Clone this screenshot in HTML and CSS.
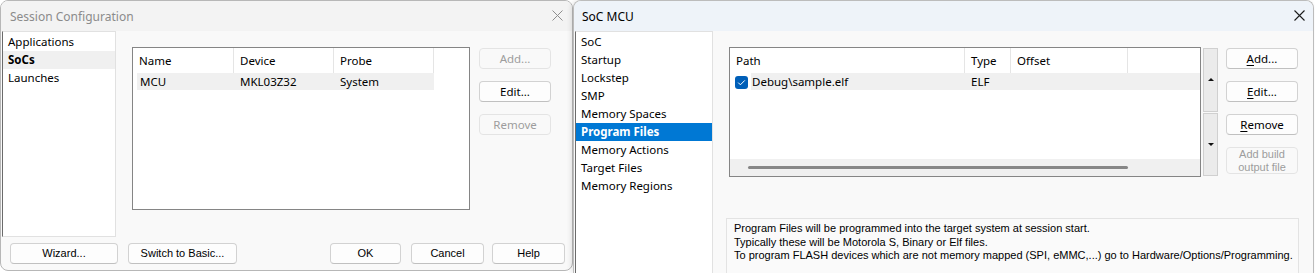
FILE: index.html
```html
<!DOCTYPE html>
<html lang="en">
<head>
<meta charset="utf-8">
<title>Session Configuration</title>
<link rel="stylesheet" href="styles.css">
</head>
<body>
  <section class="win win-session">
    <header class="titlebar titlebar-inactive">
      <span class="title">Session Configuration</span>
      <svg class="close" width="11" height="11" viewBox="0 0 11 11"><path d="M0.5 0.5L10.5 10.5M10.5 0.5L0.5 10.5"/></svg>
    </header>
    <div class="win-body">
      <div class="session-main">
        <ul class="navlist nav-session">
          <li class="nav-item">Applications</li>
          <li class="nav-item nav-current">SoCs</li>
          <li class="nav-item">Launches</li>
        </ul>
        <div class="pane pane-session">
          <div class="listview lv-socs">
            <div class="lv-head">
              <div class="th col-name">Name</div>
              <div class="th col-dev">Device</div>
              <div class="th col-probe">Probe</div>
            </div>
            <div class="lv-row row-socs">
              <div class="td td-name">MCU</div>
              <div class="td td-dev">MKL03Z32</div>
              <div class="td td-probe">System</div>
            </div>
          </div>
          <div class="btn-col">
            <button class="btn" disabled>Add...</button>
            <button class="btn">Edit...</button>
            <button class="btn" disabled>Remove</button>
          </div>
        </div>
      </div>
      <footer class="dialog-bar">
        <button class="btn btn-bar btn-wizard">Wizard...</button>
        <button class="btn btn-bar btn-switch">Switch to Basic...</button>
        <button class="btn btn-bar btn-ok">OK</button>
        <button class="btn btn-bar btn-cancel">Cancel</button>
        <button class="btn btn-bar btn-help">Help</button>
      </footer>
    </div>
  </section>

  <section class="win win-soc">
    <header class="titlebar titlebar-active">
      <span class="title">SoC MCU</span>
      <svg class="close" width="11" height="11" viewBox="0 0 11 11"><path d="M0.5 0.5L10.5 10.5M10.5 0.5L0.5 10.5"/></svg>
    </header>
    <div class="win-body soc-body">
      <ul class="navlist nav-soc">
        <li class="nav-item">SoC</li>
        <li class="nav-item">Startup</li>
        <li class="nav-item">Lockstep</li>
        <li class="nav-item">SMP</li>
        <li class="nav-item">Memory Spaces</li>
        <li class="nav-item nav-selected">Program Files</li>
        <li class="nav-item">Memory Actions</li>
        <li class="nav-item">Target Files</li>
        <li class="nav-item">Memory Regions</li>
      </ul>
      <div class="pane pane-soc">
        <div class="soc-top">
          <div class="listview lv-files">
            <div class="lv-head">
              <div class="th col-path">Path</div>
              <div class="th col-type">Type</div>
              <div class="th col-offset">Offset</div>
            </div>
            <div class="lv-row row-files">
              <span class="checkbox"><svg width="13" height="13" viewBox="0 0 13 13"><path d="M3.2 6.6L5.4 8.8L9.8 4.4"/></svg></span>
              <div class="row-hl">
                <div class="td td-path">Debug\sample.elf</div>
                <div class="td td-type">ELF</div>
              </div>
            </div>
            <div class="lv-fill"></div>
            <div class="hscroll"><div class="hthumb"></div></div>
          </div>
          <div class="spin">
            <div class="spin-btn"><span class="tri-up"></span></div>
            <div class="spin-btn"><span class="tri-down"></span></div>
          </div>
          <div class="btn-col">
            <button class="btn"><u>A</u>dd...</button>
            <button class="btn"><u>E</u>dit...</button>
            <button class="btn"><u>R</u>emove</button>
            <button class="btn btn-tall" disabled><span class="ln">Add build</span><span class="ln">output file</span></button>
          </div>
        </div>
        <div class="infobox">
          <p>Program Files will be programmed into the target system at session start.</p>
          <p>Typically these will be Motorola S, Binary or Elf files.</p>
          <p>To program FLASH devices which are not memory mapped (SPI, eMMC,...) go to Hardware/Options/Programming.</p>
        </div>
      </div>
    </div>
  </section>
</body>
</html>
```
FILE: styles.css
```css
* { box-sizing: border-box; margin: 0; padding: 0; }
html, body { width: 1315px; height: 273px; overflow: hidden; background: #ffffff; }
body {
  display: flex;
  align-items: flex-start;
  font-family: "Segoe UI", "Noto Sans", sans-serif;
  font-size: 11.5px;
  color: #000;
}
ul { list-style: none; }

.win {
  display: flex;
  flex-direction: column;
  background: #f9f9f9;
  border: 1px solid #b7b7b7;
  overflow: hidden;
}
.win-session { width: 573px; height: 271px; border-radius: 8px; }
.win-soc {
  width: 741px;
  height: 273px;
  border-radius: 8px 8px 0 0;
  border-color: #bcbcbc;
  border-bottom: none;
  box-shadow: -2px 0 5px rgba(0, 0, 0, 0.10);
}

.titlebar {
  height: 30px;
  flex: none;
  display: flex;
  align-items: center;
  justify-content: space-between;
}
.titlebar-inactive { background: #f3f3f3; padding: 1px 9px 0 9px; }
.titlebar-inactive .title { color: #8b8b8b; font-size: 12px; }
.titlebar-inactive .close path { stroke: #8e8e8e; stroke-width: 1; fill: none; }
.titlebar-active { background: #eef3f9; padding: 1px 8px 0 8px; }
.titlebar-active .title { color: #000; font-size: 12px; }
.titlebar-active .close path { stroke: #1c1c1c; stroke-width: 1.1; fill: none; }
.close { margin-bottom: 2px; }

.win-body { flex: 1; display: flex; flex-direction: column; min-height: 0; }
.soc-body { flex-direction: row; align-items: flex-start; }

.session-main { display: flex; height: 206px; }

.navlist {
  background: #fff;
  border: 1px solid #e1e1e1;
  border-left-color: #6b6b6b;
  margin-left: 1px;
  padding-top: 1px;
}
.nav-session { width: 114px; height: 206px; }
.nav-soc { width: 138px; height: 242px; border-bottom: none; }
.nav-item { height: 18px; line-height: 18px; padding-left: 5px; white-space: nowrap; }
.nav-current { background: #f0f0f0; font-weight: bold; }
.nav-selected { background: #0078d4; color: #fff; font-weight: bold; }

.pane { padding: 16px 0 0 16px; }
.pane-session { display: flex; align-items: flex-start; }
.pane-soc { display: flex; flex-direction: column; }

.listview {
  background: #fff;
  border: 1px solid #858585;
  display: flex;
  flex-direction: column;
}
.lv-socs { width: 338px; height: 163px; }
.lv-files { width: 472px; height: 130px; }

.lv-head { display: flex; height: 25px; flex: none; }
.th {
  height: 25px;
  line-height: 25px;
  padding-left: 6px;
  border-right: 1px solid #e5e5e5;
  white-space: nowrap;
}
.col-name { width: 101px; }
.col-dev { width: 100px; }
.col-probe { width: 100px; }
.col-path { width: 235px; }
.col-type { width: 46px; }
.col-offset { width: 117px; }

.lv-row { display: flex; height: 17px; flex: none; line-height: 17px; }
.td { white-space: nowrap; }
.row-socs { margin-left: 4px; width: 297px; background: #f0f0f0; }
.td-name { width: 97px; padding-left: 3px; }
.td-dev { width: 100px; padding-left: 6px; }
.td-probe { width: 100px; padding-left: 6px; }

.row-files { padding-left: 5px; }
.checkbox {
  width: 13px;
  height: 13px;
  margin-top: 3px;
  border-radius: 3px;
  background: #005fb8;
  display: block;
}
.checkbox svg { display: block; }
.checkbox path { stroke: #fff; stroke-width: 1; fill: none; }
.row-hl { flex: 1; margin-left: 3px; background: #f0f0f0; display: flex; }
.td-path { width: 214px; padding-left: 1px; }
.td-type { padding-left: 6px; }

.lv-fill { flex: 1; }
.hscroll { height: 17px; flex: none; background: #f0f0f0; padding-top: 7px; }
.hthumb { margin-left: 18px; width: 380px; height: 3px; border-radius: 2px; background: #868686; }

.spin {
  width: 15px;
  height: 128px;
  margin: 1px 0 0 2px;
  display: flex;
  flex-direction: column;
  gap: 1px;
}
.spin-btn {
  flex: 1;
  background: #ebebeb;
  border: 1px solid #d0d0d0;
  display: flex;
  align-items: center;
  justify-content: center;
}
.tri-up { width: 0; height: 0; border-left: 3px solid transparent; border-right: 3px solid transparent; border-bottom: 3px solid #111; }
.tri-down { width: 0; height: 0; border-left: 3px solid transparent; border-right: 3px solid transparent; border-top: 3px solid #111; }

.btn-col { display: flex; flex-direction: column; gap: 12px; width: 72px; padding-top: 1px; }
.pane-session .btn-col { margin-left: 9px; }
.soc-top .btn-col { margin-left: 8px; }
.soc-top { display: flex; align-items: flex-start; }

.btn {
  font-family: inherit;
  font-size: 11.5px;
  color: #000;
  height: 21px;
  background: #fdfdfd;
  border: 1px solid #d2d2d2;
  border-bottom-color: #c0c0c0;
  border-radius: 4px;
  line-height: 1;
}
.btn:disabled { color: #9d9d9d; background: #f9f9f9; border-color: #e4e4e4; }
.btn u { text-decoration-thickness: 1px; text-underline-offset: 2px; }
.btn-tall {
  height: 27px;
  display: flex;
  flex-direction: column;
  align-items: center;
  justify-content: center;
  font-family: "Liberation Sans", Arial, sans-serif;
  font-size: 11px;
}
.btn-tall .ln { display: block; height: 13px; line-height: 13px; }

.dialog-bar { display: flex; height: 33px; padding: 6px 7px 0 9px; }
.btn-bar { font-family: "Liberation Sans", Arial, sans-serif; font-size: 11px; height: 21px; }
.btn-wizard { width: 108px; }
.btn-switch { width: 109px; margin-left: 10px; }
.btn-ok { width: 71px; margin-left: auto; }
.btn-cancel { width: 73px; margin-left: 10px; }
.btn-help { width: 73px; margin-left: 8px; }

.infobox {
  margin: 41px 0 0 -3px;
  width: 573px;
  height: 55px;
  background: #fafafa;
  border: 1px solid #e3e3e3;
  border-bottom: none;
  padding: 3px 0 0 7px;
  font-family: "Liberation Sans", Arial, sans-serif;
  font-size: 11px;
  line-height: 13.5px;
}
```
